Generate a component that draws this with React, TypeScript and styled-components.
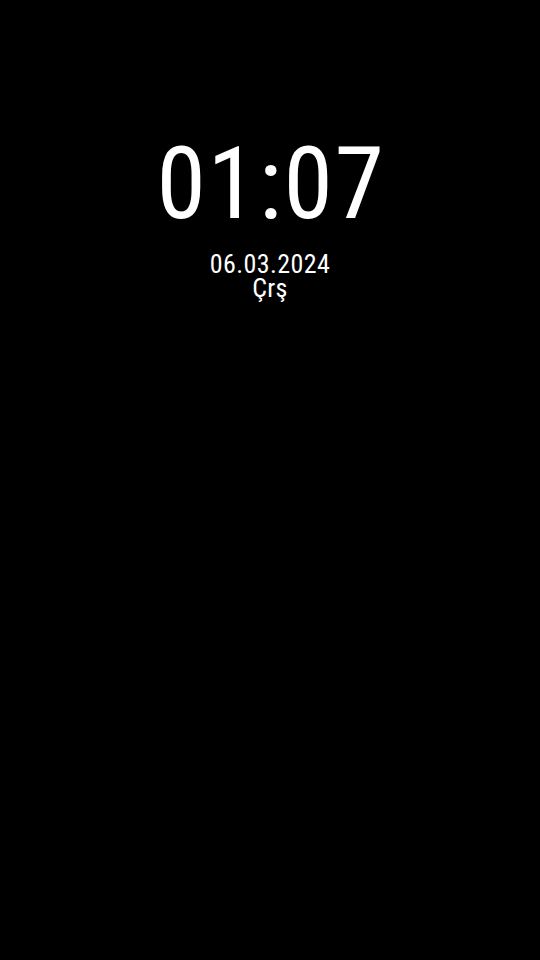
import React from "react";
import styled, { createGlobalStyle } from "styled-components";

const GlobalStyle = createGlobalStyle`
  html, body { margin: 0; padding: 0; background: #000; }
  #root { min-height: 960px; }
`;

const Screen = styled.main`
  width: 540px;
  height: 960px;
  background: #000;
  display: flex;
  flex-direction: column;
  align-items: center;
  padding-top: 134px;
  box-sizing: border-box;
  font-family: "Roboto Condensed", Roboto, "DejaVu Sans Condensed", sans-serif;
  color: #fff;
`;

const Time = styled.div`
  font-size: 100px;
  font-weight: 400;
  line-height: 100px;
  letter-spacing: 1.6px;
  padding-left: 2px;
`;

const DateBlock = styled.div`
  margin-top: 18px;
  display: flex;
  flex-direction: column;
  align-items: center;
  font-size: 26px;
  line-height: 24px;
  font-weight: 400;
  letter-spacing: 0.4px;
`;

const DateLine = styled.span`
  display: block;
`;

export default function App() {
  return (
    <>
      <GlobalStyle />
      <Screen>
        <Time>01:07</Time>
        <DateBlock>
          <DateLine>06.03.2024</DateLine>
          <DateLine>Çrş</DateLine>
        </DateBlock>
      </Screen>
    </>
  );
}
